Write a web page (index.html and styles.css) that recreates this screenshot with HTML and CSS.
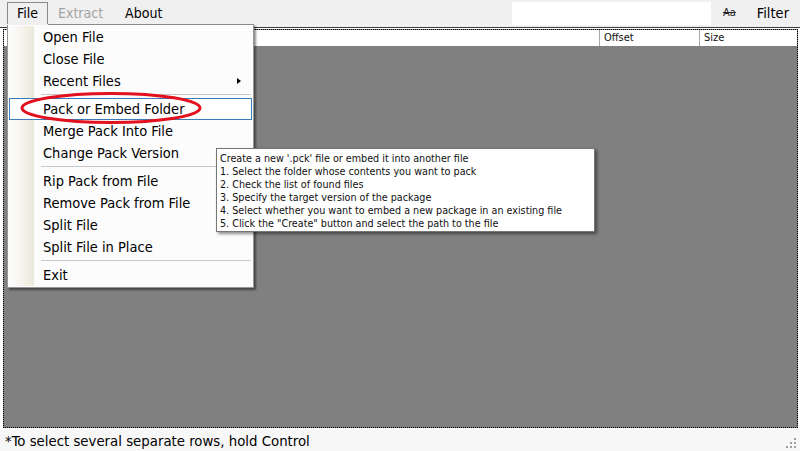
FILE: index.html
```html
<!DOCTYPE html>
<html>
<head>
<meta charset="utf-8">
<link rel="stylesheet" href="styles.css">
</head>
<body>
<div class="app">
  <div class="menubar">
    <div class="mb-item mb-open">File</div>
    <div class="mb-item mb-disabled">Extract</div>
    <div class="mb-item mb-about">About</div>
    <div class="mb-spacer"></div>
    <div class="search"></div>
    <div class="case"><span>Aa</span></div>
    <div class="filter">Filter</div>
  </div>
  <div class="panel">
    <div class="grid">
      <div class="header">
        <div class="col col-name"></div>
        <div class="col col-offset">Offset</div>
        <div class="col col-size">Size</div>
      </div>
      <div class="rows"></div>
    </div>
  </div>
  <div class="status">
    <span>*To select several separate rows, hold Control</span>
    <svg class="grip" width="11" height="11" viewBox="0 0 11 11">
      <rect x="8" y="0" width="2" height="2" fill="#a0a0a0"/>
      <rect x="4" y="4" width="2" height="2" fill="#a0a0a0"/>
      <rect x="8" y="4" width="2" height="2" fill="#a0a0a0"/>
      <rect x="0" y="8" width="2" height="2" fill="#a0a0a0"/>
      <rect x="4" y="8" width="2" height="2" fill="#a0a0a0"/>
      <rect x="8" y="8" width="2" height="2" fill="#a0a0a0"/>
    </svg>
  </div>

  <div class="menu">
    <div class="gutter"></div>
    <div class="menu-list">
      <div class="item">Open File</div>
      <div class="item">Close File</div>
      <div class="item has-sub">Recent Files<span class="arrow"></span></div>
      <div class="sep"></div>
      <div class="item hover">Pack or Embed Folder</div>
      <div class="item">Merge Pack Into File</div>
      <div class="item">Change Pack Version</div>
      <div class="sep"></div>
      <div class="item">Rip Pack from File</div>
      <div class="item">Remove Pack from File</div>
      <div class="item">Split File</div>
      <div class="item">Split File in Place</div>
      <div class="sep"></div>
      <div class="item">Exit</div>
    </div>
  </div>

  <svg class="ring" width="190" height="36" viewBox="0 0 190 36">
    <ellipse cx="95" cy="18" rx="89" ry="14.5" fill="none" stroke="#e3101e" stroke-width="3"/>
  </svg>

  <div class="tooltip">
    <div>Create a new '.pck' file or embed it into another file</div>
    <div>1. Select the folder whose contents you want to pack</div>
    <div>2. Check the list of found files</div>
    <div>3. Specify the target version of the package</div>
    <div>4. Select whether you want to embed a new package in an existing file</div>
    <div>5. Click the "Create" button and select the path to the file</div>
  </div>
</div>
</body>
</html>
```

FILE: styles.css
```css
* { box-sizing: border-box; }
html, body {
  margin: 0;
  padding: 0;
  width: 800px;
  height: 451px;
  overflow: hidden;
  background: #f0f0f0;
  font-family: "DejaVu Sans Condensed", "DejaVu Sans", sans-serif;
  color: #000;
}
.app {
  position: relative;
  width: 800px;
  height: 451px;
  display: flex;
  flex-direction: column;
}
.menubar {
  height: 27px;
  display: flex;
  align-items: flex-start;
  padding-left: 7px;
  font-size: 14px;
  flex: none;
}
.mb-item {
  height: 22px;
  margin-top: 2px;
  line-height: 21px;
  padding: 0 9px;
  border: 1px solid transparent;
  border-bottom: none;
}
.mb-open {
  border-color: #8a8a8a;
  height: 23px;
}
.mb-disabled { color: #a3a3a3; }
.mb-about { margin-left: 2px; }
.mb-spacer { flex: 1; }
.search {
  width: 199px;
  height: 23px;
  margin-top: 2px;
  background: #fff;
}
.case {
  margin-left: 12px;
  margin-top: 2px;
  height: 22px;
  line-height: 22px;
  font-size: 11px;
  color: #222;
}
.case span { text-decoration: line-through; }
.filter {
  margin-left: 21px;
  margin-right: 11px;
  margin-top: 2px;
  line-height: 22px;
  font-size: 14.5px;
}
.panel {
  flex: none;
  height: 402px;
  border-top: 1px solid #3a3a3a;
  padding: 1px 2px 1px 3px;
  background: #fff;
}
.grid {
  height: 399px;
  border: 1px dotted #000;
  display: flex;
  flex-direction: column;
  background: #808080;
}
.header {
  height: 16px;
  display: flex;
  background: #fff;
  font-size: 11px;
  line-height: 16px;
  color: #111;
  flex: none;
}
.col { height: 16px; }
.col-name { width: 595px; }
.col-offset {
  width: 100px;
  border-left: 1px solid #a8a8a8;
  padding-left: 4px;
}
.col-size {
  flex: 1;
  border-left: 1px solid #a8a8a8;
  padding-left: 4px;
}
.rows { flex: 1; }
.status {
  flex: 1;
  display: flex;
  align-items: center;
  justify-content: space-between;
  padding-left: 5px;
  padding-right: 3px;
  font-size: 14.8px;
  background: #f7f7f7;
}
.grip { align-self: flex-end; margin-bottom: 2px; }

.menu {
  position: absolute;
  left: 7px;
  top: 24px;
  width: 247px;
  height: 264px;
  background: #fcfcfc;
  border: 1px solid #979797;
  border-top-color: #8a8a8a;
  box-shadow: 2px 2px 2px rgba(0,0,0,0.45);
  display: flex;
  padding: 1px;
  font-size: 14.5px;
}
.menu::before {
  content: "";
  position: absolute;
  left: -1px;
  top: -1px;
  width: 41px;
  height: 1px;
  background: #f0f0f0;
}
.gutter {
  width: 24px;
  margin-left: 1px;
  background: linear-gradient(to right, #fcfcfc, #f3f1e8 60%, #ebe8da);
  flex: none;
}
.menu-list {
  flex: 1;
  padding-top: 0;
  position: relative;
}
.item {
  height: 22px;
  line-height: 22px;
  padding-left: 9px;
  position: relative;
  white-space: nowrap;
}
.item.hover {
  margin-left: -25px;
  padding-left: 33px;
  border: 1px solid #3b7dbb;
  line-height: 20px;
  background: #fff;
}
.arrow {
  position: absolute;
  right: 11px;
  top: 8px;
  width: 0;
  height: 0;
  border-top: 3.5px solid transparent;
  border-bottom: 3.5px solid transparent;
  border-left: 4px solid #000;
}
.sep {
  height: 6px;
  margin-left: 7px;
  position: relative;
}
.sep::after {
  content: "";
  position: absolute;
  left: 0;
  right: 1px;
  top: 2px;
  height: 1px;
  background: #c8c8c8;
}
.ring {
  position: absolute;
  left: 16px;
  top: 90px;
}
.tooltip {
  position: absolute;
  left: 216px;
  top: 148px;
  width: 379px;
  height: 84px;
  background: #fff;
  border: 1px solid #767676;
  box-shadow: 2px 2px 3px rgba(0,0,0,0.45);
  padding: 3px 0 0 3px;
  font-size: 10.7px;
  line-height: 13px;
  color: #111;
  white-space: nowrap;
}
```
